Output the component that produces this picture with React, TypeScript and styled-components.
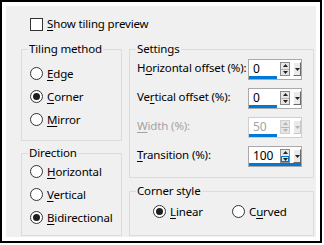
import React from 'react';
import styled, { createGlobalStyle } from 'styled-components';

const GlobalStyle = createGlobalStyle`
  html, body { margin: 0; padding: 0; background: #fff; }
  body {
    font-family: 'Noto Sans', 'Segoe UI', sans-serif;
    font-size: 11.5px;
    letter-spacing: -0.15px;
    color: #000;
  }
`;

const Frame = styled.div`
  box-sizing: border-box;
  width: 322px;
  height: 243px;
  border: 2px solid #000;
  padding: 4px;
  background: #fff;
`;

const Dialog = styled.div`
  box-sizing: border-box;
  height: 100%;
  background: #f0f0f0;
  padding: 11px 2px 0 15px;
  display: flex;
  flex-direction: column;
  gap: 11px;
`;

const Key = styled.span`
  text-decoration: underline;
  text-underline-offset: 2px;
`;

const CheckRow = styled.label`
  display: flex;
  align-items: center;
  gap: 4px;
  height: 14px;
  padding-left: 9px;
  line-height: 14px;
`;

const CheckBox = styled.span`
  box-sizing: border-box;
  width: 13px;
  height: 13px;
  border: 1px solid #333;
  background: #fff;
  flex-shrink: 0;
`;

const Columns = styled.div`
  display: grid;
  grid-template-columns: 101px 185px;
  column-gap: 7px;
  align-items: start;
`;

const Column = styled.div<{ $gap: number }>`
  display: flex;
  flex-direction: column;
  gap: ${p => p.$gap}px;
`;

const Group = styled.fieldset`
  margin: 0;
  padding: 0;
  min-width: 0;
  border: 1px solid #dcdcdc;
`;

const Legend = styled.legend`
  padding: 0 1px;
  margin-left: 6px;
  line-height: 14px;
`;

const GroupBody = styled.div<{ $pad: string }>`
  padding: ${p => p.$pad};
`;

const RadioRow = styled.label`
  display: flex;
  align-items: center;
  gap: 4px;
  height: 23px;
  line-height: 14px;
  white-space: nowrap;
`;

const RadioCircle = styled.span<{ $on?: boolean }>`
  box-sizing: border-box;
  width: 13px;
  height: 13px;
  border-radius: 50%;
  border: 1px solid #333;
  background: #fff;
  display: flex;
  align-items: center;
  justify-content: center;
  flex-shrink: 0;

  &::after {
    content: '';
    width: 7px;
    height: 7px;
    border-radius: 50%;
    background: #1e1e1e;
    display: ${p => (p.$on ? 'block' : 'none')};
  }
`;

const SettingRows = styled.div`
  display: flex;
  flex-direction: column;
  gap: 8px;
`;

const SettingRow = styled.div`
  display: flex;
  align-items: center;
  justify-content: space-between;
  height: 21px;
`;

const SettingLabel = styled.span<{ $disabled?: boolean }>`
  line-height: 14px;
  padding-bottom: 4px;
  white-space: nowrap;
  color: ${p => (p.$disabled ? '#a3a3a3' : '#000')};
`;

const SpinBox = styled.div<{ $wide?: boolean; $disabled?: boolean }>`
  box-sizing: border-box;
  width: 54px;
  height: 21px;
  border: 1px solid ${p => (p.$disabled ? '#cfcfcf' : '#a9a9a9')};
  background: #fff;
  display: flex;
  align-items: flex-start;
  gap: 3px;
  box-shadow: ${p => (p.$wide ? 'inset 0 -3px 0 #0078d7' : 'none')};
`;

const SpinField = styled.div<{ $wide?: boolean; $disabled?: boolean }>`
  box-sizing: border-box;
  width: 28px;
  height: 19px;
  padding: 2px 0 0 4px;
  line-height: 14px;
  font-size: 12px;
  color: ${p => (p.$disabled ? '#a3a3a3' : '#000')};
  border-bottom: 3px solid ${p => (p.$wide ? 'transparent' : '#0078d7')};
`;

const UpDown = styled.div<{ $disabled?: boolean }>`
  box-sizing: border-box;
  width: 10px;
  height: 14px;
  margin-top: 2px;
  display: flex;
  flex-direction: column;
  border: 1px solid ${p => (p.$disabled ? '#cfcfcf' : '#8c8c8c')};
`;

const Half = styled.div<{ $hot?: boolean }>`
  flex: 1;
  display: flex;
  align-items: center;
  justify-content: center;
  background: ${p => (p.$hot ? '#cce4f7' : '#e6e6e6')};
  outline: ${p => (p.$hot ? '1px solid #0078d7' : 'none')};
  outline-offset: -1px;

  & + & {
    border-top: 1px solid #b5b5b5;
  }
`;

const DropButton = styled.div<{ $disabled?: boolean }>`
  box-sizing: border-box;
  width: 8px;
  height: 14px;
  margin-top: 2px;
  display: flex;
  align-items: center;
  justify-content: center;
  background: #eaeaea;
  border-right: 1px solid ${p => (p.$disabled ? '#c8c8c8' : '#6a6a6a')};
  border-bottom: 1px solid ${p => (p.$disabled ? '#c8c8c8' : '#6a6a6a')};
  border-top: 1px solid #fff;
  border-left: 1px solid #fff;
`;

const StyleRow = styled.div`
  display: grid;
  grid-template-columns: 79px auto;
`;

const Tri = ({ dir, color }: { dir: 'up' | 'down'; color: string }) => (
  <svg width="5" height="3" viewBox="0 0 5 3">
    <path d={dir === 'up' ? 'M2.5 0 L5 3 L0 3 Z' : 'M0 0 L5 0 L2.5 3 Z'} fill={color} />
  </svg>
);

type SpinProps = { value: string; wide?: boolean; disabled?: boolean; hot?: boolean };

const Spinner = ({ value, wide, disabled, hot }: SpinProps) => {
  const arrow = disabled ? '#b4b4b4' : '#222';
  return (
    <SpinBox $wide={wide} $disabled={disabled}>
      <SpinField $wide={wide} $disabled={disabled}>{value}</SpinField>
      <UpDown $disabled={disabled}>
        <Half><Tri dir="up" color={arrow} /></Half>
        <Half $hot={hot}><Tri dir="down" color={arrow} /></Half>
      </UpDown>
      <DropButton $disabled={disabled}>
        <Tri dir="down" color={arrow} />
      </DropButton>
    </SpinBox>
  );
};

const Radio = ({ on, children }: { on?: boolean; children: React.ReactNode }) => (
  <RadioRow>
    <RadioCircle $on={on} />
    <span>{children}</span>
  </RadioRow>
);

export default function App() {
  return (
    <>
      <GlobalStyle />
      <Frame>
        <Dialog>
          <CheckRow>
            <CheckBox />
            <span><Key>S</Key>how tiling preview</span>
          </CheckRow>

          <Columns>
            <Column $gap={5}>
              <Group>
                <Legend>Tiling method</Legend>
                <GroupBody $pad="6px 0 9px 8px">
                  <Radio><Key>E</Key>dge</Radio>
                  <Radio on><Key>C</Key>orner</Radio>
                  <Radio><Key>M</Key>irror</Radio>
                </GroupBody>
              </Group>
              <Group>
                <Legend>Direction</Legend>
                <GroupBody $pad="0 0 6px 8px">
                  <Radio><Key>H</Key>orizontal</Radio>
                  <Radio><Key>V</Key>ertical</Radio>
                  <Radio on><Key>B</Key>idirectional</Radio>
                </GroupBody>
              </Group>
            </Column>

            <Column $gap={6}>
              <Group>
                <Legend>Settings</Legend>
                <GroupBody $pad="3px 11px 10px 7px">
                  <SettingRows>
                    <SettingRow>
                      <SettingLabel>H<Key>o</Key>rizontal offset (%):</SettingLabel>
                      <Spinner value="0" />
                    </SettingRow>
                    <SettingRow>
                      <SettingLabel>Ve<Key>r</Key>tical offset (%):</SettingLabel>
                      <Spinner value="0" />
                    </SettingRow>
                    <SettingRow>
                      <SettingLabel $disabled><Key>W</Key>idth (%):</SettingLabel>
                      <Spinner value="50" disabled />
                    </SettingRow>
                    <SettingRow>
                      <SettingLabel><Key>T</Key>ransition (%):</SettingLabel>
                      <Spinner value="100" wide hot />
                    </SettingRow>
                  </SettingRows>
                </GroupBody>
              </Group>
              <Group>
                <Legend>Corner style</Legend>
                <GroupBody $pad="2px 0 12px 23px">
                  <StyleRow>
                    <Radio on><Key>L</Key>inear</Radio>
                    <Radio>C<Key>u</Key>rved</Radio>
                  </StyleRow>
                </GroupBody>
              </Group>
            </Column>
          </Columns>
        </Dialog>
      </Frame>
    </>
  );
}
